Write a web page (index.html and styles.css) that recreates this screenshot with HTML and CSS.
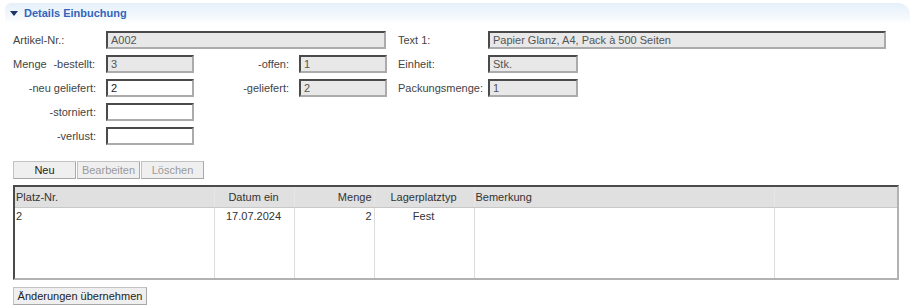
FILE: index.html
```html
<!DOCTYPE html>
<html lang="de">
<head>
<meta charset="utf-8">
<title>Details Einbuchung</title>
<link rel="stylesheet" href="styles.css">
</head>
<body>
<div class="panel">
  <div class="head"><span class="tri"></span><span class="title">Details Einbuchung</span></div>
  <div class="form">
    <label class="lbl">Artikel-Nr.:</label>
    <input class="inp ro span3" value="A002" readonly>
    <label class="lbl l3">Text 1:</label>
    <input class="inp ro wide" value="Papier Glanz, A4, Pack à 500 Seiten" readonly>

    <label class="lbl split"><span>Menge</span><span>-bestellt:</span></label>
    <input class="inp ro" value="3" readonly>
    <label class="lbl r2">-offen:</label>
    <input class="inp ro" value="1" readonly>
    <label class="lbl l3">Einheit:</label>
    <input class="inp ro short" value="Stk." readonly>

    <label class="lbl r1">-neu geliefert:</label>
    <input class="inp" value="2">
    <label class="lbl r2">-geliefert:</label>
    <input class="inp ro" value="2" readonly>
    <label class="lbl l3">Packungsmenge:</label>
    <input class="inp ro short" value="1" readonly>

    <label class="lbl r1">-storniert:</label>
    <input class="inp" value="">
    <span class="empty"></span>

    <label class="lbl r1">-verlust:</label>
    <input class="inp" value="">
    <span class="empty"></span>
  </div>

  <div class="btns">
    <button class="btn">Neu</button>
    <button class="btn dis">Bearbeiten</button>
    <button class="btn dis">Löschen</button>
  </div>

  <div class="grid">
    <table>
      <colgroup>
        <col class="c1"><col class="c2"><col class="c3"><col class="c4"><col class="c5"><col class="c6">
      </colgroup>
      <thead>
        <tr><th class="al">Platz-Nr.</th><th class="ac">Datum ein</th><th class="ar">Menge</th><th class="ac">Lagerplatztyp</th><th class="al">Bemerkung</th><th></th></tr>
      </thead>
      <tbody>
        <tr class="data"><td class="al">2</td><td class="ac">17.07.2024</td><td class="ar">2</td><td class="ac">Fest</td><td></td><td></td></tr>
        <tr class="fill"><td></td><td></td><td></td><td></td><td></td><td></td></tr>
      </tbody>
    </table>
  </div>

  <div class="foot">
    <button class="btn save">Änderungen übernehmen</button>
  </div>
</div>
</body>
</html>
```

FILE: styles.css
```css
html, body {
  margin: 0;
  padding: 0;
  background: #ffffff;
}
body {
  font-family: "Liberation Sans", Arial, sans-serif;
  font-size: 11px;
  color: #333333;
}
.panel {
  padding-top: 3px;
}
.head {
  margin: 0 5px;
  height: 21px;
  border-radius: 6px 12px 0 0;
  background: linear-gradient(to bottom, #e6f0fa 0%, #f1f7fc 55%, #ffffff 100%);
  display: flex;
  align-items: center;
}
.tri {
  width: 0;
  height: 0;
  margin-left: 5px;
  margin-right: 6px;
  border-left: 4px solid transparent;
  border-right: 4px solid transparent;
  border-top: 5px solid #1d3466;
}
.title {
  font-weight: bold;
  color: #3366bb;
  font-size: 11px;
  position: relative;
  top: -1px;
}
.form {
  margin-top: 7px;
  padding-left: 13px;
  display: grid;
  grid-template-columns: 93px 88px 105px 88px 101px 398px;
  grid-auto-rows: 18px;
  row-gap: 6px;
  align-items: center;
}
.lbl {
  color: #444444;
  white-space: nowrap;
}
.lbl.split {
  display: flex;
  justify-content: space-between;
  padding-right: 11px;
}
.lbl.r1 {
  text-align: right;
  padding-right: 10px;
}
.lbl.r2 {
  text-align: right;
  padding-right: 10px;
}
.lbl.l3 {
  padding-left: 11px;
}
.empty {
  grid-column: span 4;
}
.inp {
  box-sizing: border-box;
  height: 18px;
  width: 100%;
  margin: 0;
  padding: 0 3px;
  font-family: "Liberation Sans", Arial, sans-serif;
  font-size: 11px;
  color: #222222;
  background: #ffffff;
  border-style: solid;
  border-width: 2px;
  border-color: #4a4a4a #ababab #ababab #4a4a4a;
  outline: none;
}
.inp.ro {
  background: #e8e8e8;
  color: #555555;
}
.inp.span3 {
  grid-column: span 3;
  width: 280px;
}
.inp.short {
  width: 90px;
}
.btns {
  margin-top: 16px;
  padding-left: 13px;
  display: flex;
  gap: 1px;
}
.btn {
  box-sizing: border-box;
  height: 18px;
  margin: 0;
  padding: 0;
  white-space: nowrap;
  font-family: "Liberation Sans", Arial, sans-serif;
  font-size: 11px;
  color: #222222;
  background: #efefef;
  border: 1px solid #c2c2c2;
  border-bottom-color: #a8a8a8;
  border-right-color: #a8a8a8;
}
.btns .btn {
  width: 63px;
}
.btn.dis {
  color: #9a9a9a;
}
.grid {
  margin: 6px 0 0 13px;
  width: 886px;
  height: 95px;
  box-sizing: border-box;
  border-style: solid;
  border-width: 2px;
  border-color: #4a4a4a #b2b2b2 #b2b2b2 #4a4a4a;
  background: #ffffff;
}
table {
  width: 882px;
  height: 91px;
  border-collapse: collapse;
  table-layout: fixed;
  font-size: 11px;
}
col.c1 { width: 199px; }
col.c2 { width: 80px; }
col.c3 { width: 80px; }
col.c4 { width: 100px; }
col.c5 { width: 300px; }
col.c6 { width: 123px; }
th, td {
  padding: 0 2px 0 1px;
  white-space: nowrap;
  overflow: hidden;
  font-weight: normal;
  color: #333333;
  border-left: 1px solid #dcdcdc;
}
th:first-child, td:first-child {
  border-left: none;
}
thead tr {
  height: 20px;
  background: #e0e0e0;
}
thead th {
  border-left-color: #e6e6e6;
  border-bottom: 1px solid #c8c8c8;
}
tr.data {
  height: 18px;
}
tr.data td {
  vertical-align: middle;
}
.al { text-align: left; }
.ac { text-align: center; }
.ar { text-align: right; }
.foot {
  margin-top: 7px;
  padding-left: 13px;
}
.btn.save {
  width: 134px;
  height: 18px;
}
```
